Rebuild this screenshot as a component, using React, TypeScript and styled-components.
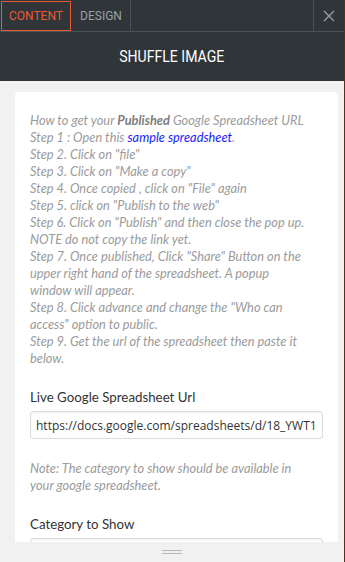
import { createGlobalStyle } from 'styled-components';
import styled from 'styled-components';

const GlobalStyle = createGlobalStyle`
  html, body {
    margin: 0;
    padding: 0;
    background: #4a3320;
  }
  * {
    box-sizing: border-box;
  }
`;

const Panel = styled.div`
  width: 344px;
  height: 562px;
  display: flex;
  flex-direction: column;
  background: #f1f1f1;
  font-family: 'Lato', 'Open Sans', sans-serif;
`;

const TabBar = styled.div`
  display: flex;
  height: 32px;
  background: #2f3539;
  border-bottom: 1px solid #4b5256;
`;

const Tab = styled.div<{ $active?: boolean; $width: number }>`
  width: ${(p) => p.$width}px;
  display: flex;
  align-items: center;
  justify-content: center;
  font-family: 'Roboto', 'Liberation Sans', sans-serif;
  font-size: 12px;
  text-transform: uppercase;
  color: ${(p) => (p.$active ? '#e95b33' : '#9aa3a8')};
  border: 1px solid ${(p) => (p.$active ? '#e95b33' : 'transparent')};
  border-right: 1px solid ${(p) => (p.$active ? '#e95b33' : '#4b5256')};
  margin: ${(p) => (p.$active ? '1px 0 0 1px' : '0')};
`;

const Spacer = styled.div`
  flex: 1;
  border-right: 1px solid #4b5256;
`;

const CloseButton = styled.div`
  width: 30px;
  display: flex;
  align-items: center;
  justify-content: center;
`;

const Header = styled.div`
  height: 49px;
  background: #2f3539;
  display: flex;
  align-items: center;
  justify-content: center;
  color: #fff;
  font-family: 'Roboto', 'Liberation Sans', sans-serif;
  font-size: 16px;
  text-transform: uppercase;

  span {
    display: inline-block;
    transform: scaleX(0.88);
  }
`;

const ScrollArea = styled.div`
  flex: 1;
  overflow-y: scroll;
  padding: 11px 6px 11px 15px;

  &::-webkit-scrollbar {
    width: 10px;
  }
  &::-webkit-scrollbar-track {
    background: #f1f1f1;
  }
  &::-webkit-scrollbar-thumb {
    background: #c1c1c1;
    background-clip: padding-box;
    border-left: 2px solid transparent;
    border-right: 3px solid transparent;
    border-top: 4px solid transparent;
  }
`;

const Card = styled.div`
  background: #fff;
  border-radius: 4px;
  padding: 20px 15px 20px 15px;
`;

const Instructions = styled.div`
  font-style: italic;
  font-size: 12.8px;
  line-height: 17px;
  color: #9b9b9b;
  padding-right: 8px;

  b {
    color: #7d7d7d;
  }
  a {
    color: #1a1aff;
    text-decoration: none;
  }
`;

const Note = styled(Instructions)`
  margin-top: 21px;
`;

const Field = styled.div`
  margin-top: 20px;
  display: flex;
  flex-direction: column;
  gap: 4px;
`;

const Label = styled.label`
  font-size: 13.3px;
  line-height: 20px;
  color: #333;
`;

const Input = styled.input`
  height: 28px;
  width: 100%;
  border: 1px solid #dcdcdc;
  border-radius: 3px;
  box-shadow: inset 0 1px 2px rgba(0, 0, 0, 0.07);
  padding: 0 5px;
  font-family: 'Open Sans', 'Lato', sans-serif;
  font-size: 12px;
  color: #333;
  outline: none;
`;

const BottomBar = styled.div`
  height: 20px;
  display: flex;
  align-items: center;
  justify-content: center;
  background: #f1f1f1;
  border-bottom-right-radius: 3px;
`;

const Grip = styled.div`
  width: 20px;
  height: 4px;
  border-top: 1px solid #b9b9b9;
  border-bottom: 1px solid #b9b9b9;
`;

export default function App() {
  return (
    <>
      <GlobalStyle />
      <Panel>
        <TabBar>
          <Tab $active $width={70}>Content</Tab>
          <Tab $width={60}>Design</Tab>
          <Spacer />
          <CloseButton>
            <svg width="12" height="12" viewBox="0 0 12 12">
              <path d="M1 1 L11 11 M11 1 L1 11" stroke="#9aa3a8" strokeWidth="1.2" />
            </svg>
          </CloseButton>
        </TabBar>
        <Header>
          <span>Shuffle Image</span>
        </Header>
        <ScrollArea>
          <Card>
            <Instructions>
              How to get your <b>Published</b> Google Spreadsheet URL
              <br />
              Step 1 : Open this <a href="#">sample spreadsheet</a>.
              <br />
              Step 2. Click on "file"
              <br />
              Step 3. Click on "Make a copy"
              <br />
              Step 4. Once copied , click on "File" again
              <br />
              Step 5. click on "Publish to the web"
              <br />
              Step 6. Click on "Publish" and then close the pop up. NOTE do not
              copy the link yet.
              <br />
              Step 7. Once published, Click "Share" Button on the upper right
              hand of the spreadsheet. A popup
              <br />
              window will appear.
              <br />
              Step 8. Click advance and change the "Who can access" option to
              public.
              <br />
              Step 9. Get the url of the spreadsheet then paste it below.
            </Instructions>
            <Field>
              <Label>Live Google Spreadsheet Url</Label>
              <Input
                readOnly
                value="https://docs.google.com/spreadsheets/d/18_YWT1cXk/edit"
              />
            </Field>
            <Note>
              Note: The category to show should be available in your google
              spreadsheet.
            </Note>
            <Field>
              <Label>Category to Show</Label>
              <Input readOnly value="" />
            </Field>
          </Card>
        </ScrollArea>
        <BottomBar>
          <Grip />
        </BottomBar>
      </Panel>
    </>
  );
}
